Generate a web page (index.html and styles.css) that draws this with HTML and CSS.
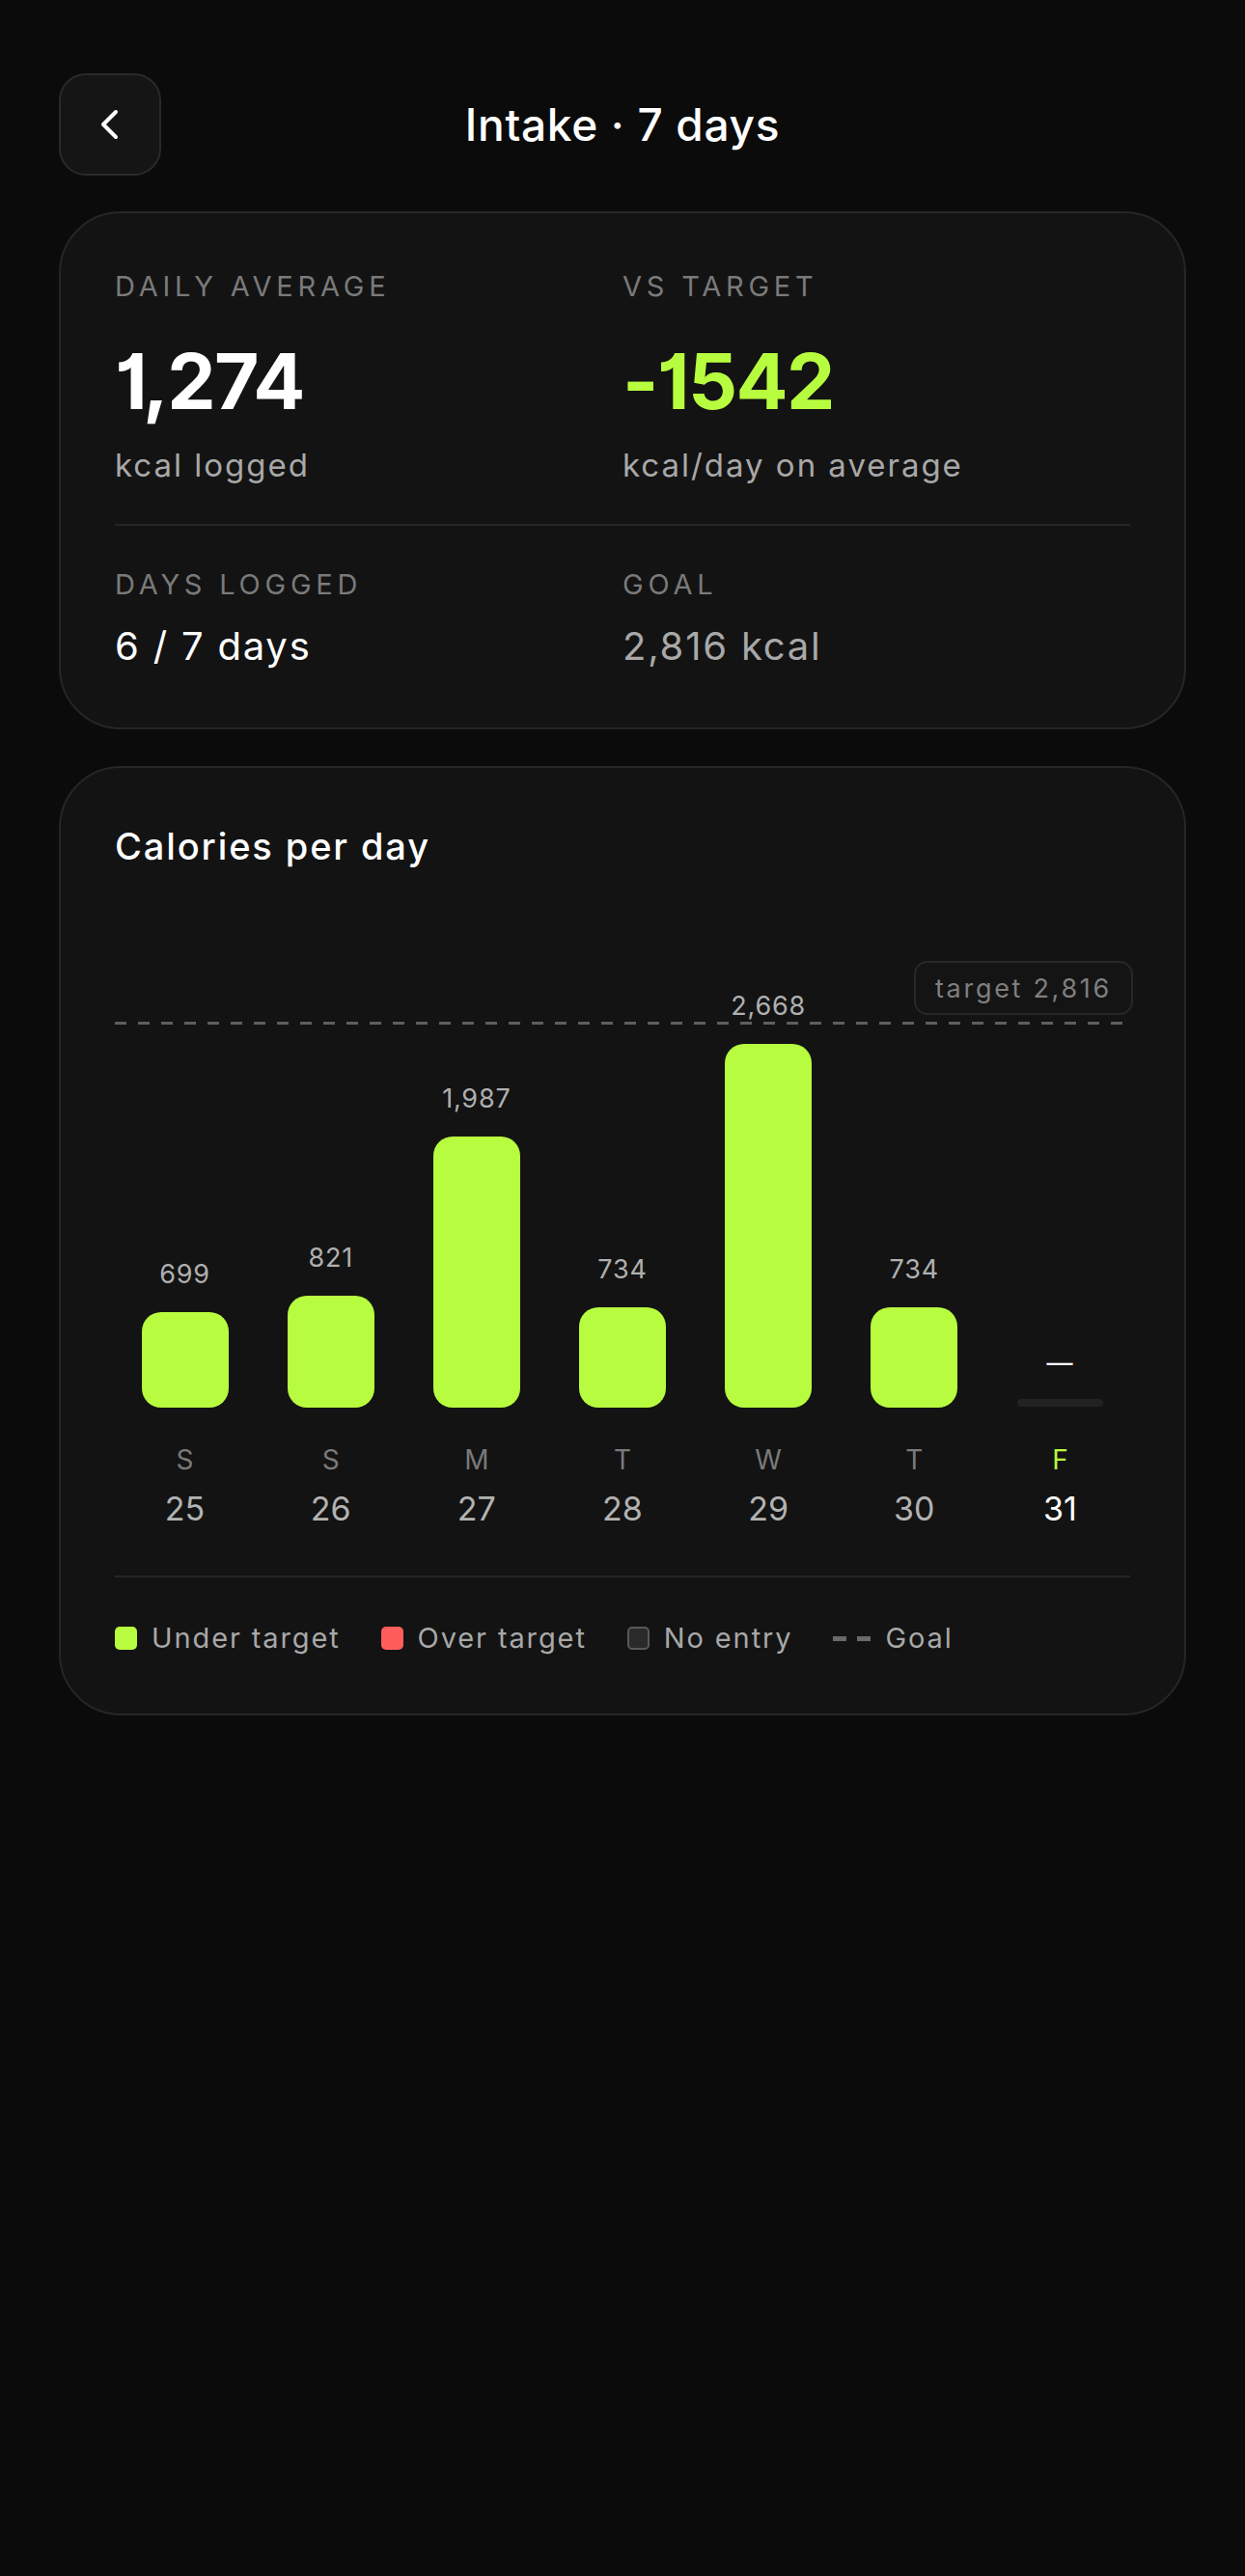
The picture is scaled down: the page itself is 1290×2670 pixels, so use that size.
FILE: index.html
```html
<!DOCTYPE html>
<html lang="en">

<head>
    <meta charset="UTF-8" />
    <meta name="viewport" content="width=device-width, initial-scale=1" />
    <title>Intake · 7 days</title>
    <link rel="stylesheet" href="styles.css">
</head>

<body>
    <div class="screen">
        <header class="topbar">
            <button class="back-btn" aria-label="Back">
                <svg viewBox="0 0 40 40" width="40" height="40">
                    <polyline points="26,7 13,20 26,33" />
                </svg>
            </button>
            <h1 class="page-title">Intake · 7 days</h1>
            <span></span>
        </header>

        <section class="card summary">
            <div class="stat-grid">
                <div class="stat">
                    <div class="stat-label">DAILY AVERAGE</div>
                    <div class="big-num">1,274</div>
                    <div class="stat-sub">kcal logged</div>
                </div>
                <div class="stat">
                    <div class="stat-label">VS TARGET</div>
                    <div class="big-num lime">-1542</div>
                    <div class="stat-sub">kcal/day on average</div>
                </div>
            </div>
            <div class="divider"></div>
            <div class="stat-grid">
                <div class="stat">
                    <div class="stat-label">DAYS LOGGED</div>
                    <div class="stat-value">6 / 7 days</div>
                </div>
                <div class="stat">
                    <div class="stat-label">GOAL</div>
                    <div class="stat-value muted">2,816 kcal</div>
                </div>
            </div>
        </section>

        <section class="card chart-card">
            <h2 class="chart-title">Calories per day</h2>

            <div class="plot">
                <div class="goal-line"></div>
                <div class="goal-pill">target 2,816</div>

                <div class="col">
                    <span class="val">699</span>
                    <div class="bar" style="height: 99px"></div>
                </div>
                <div class="col">
                    <span class="val">821</span>
                    <div class="bar" style="height: 116px"></div>
                </div>
                <div class="col">
                    <span class="val">1,987</span>
                    <div class="bar" style="height: 281px"></div>
                </div>
                <div class="col">
                    <span class="val">734</span>
                    <div class="bar" style="height: 104px"></div>
                </div>
                <div class="col">
                    <span class="val">2,668</span>
                    <div class="bar" style="height: 377px"></div>
                </div>
                <div class="col">
                    <span class="val">734</span>
                    <div class="bar" style="height: 104px"></div>
                </div>
                <div class="col">
                    <span class="val empty">—</span>
                    <div class="bar-empty"></div>
                </div>
            </div>

            <div class="days">
                <div class="day"><span class="dow">S</span><span class="date">25</span></div>
                <div class="day"><span class="dow">S</span><span class="date">26</span></div>
                <div class="day"><span class="dow">M</span><span class="date">27</span></div>
                <div class="day"><span class="dow">T</span><span class="date">28</span></div>
                <div class="day"><span class="dow">W</span><span class="date">29</span></div>
                <div class="day"><span class="dow">T</span><span class="date">30</span></div>
                <div class="day today"><span class="dow">F</span><span class="date">31</span></div>
            </div>

            <div class="divider chart-divider"></div>

            <div class="legend">
                <div class="legend-item"><span class="swatch under"></span>Under target</div>
                <div class="legend-item"><span class="swatch over"></span>Over target</div>
                <div class="legend-item"><span class="swatch none"></span>No entry</div>
                <div class="legend-item"><span class="goal-dash"><i></i><i></i></span>Goal</div>
            </div>
        </section>
    </div>
</body>
</html>
```

FILE: styles.css
```css
* {
    box-sizing: border-box;
}

body {
    margin: 0;
    background: #0b0b0b;
    font-family: Inter, "Noto Sans", sans-serif;
    color: #fff;
    min-height: 100vh;
}

.screen {
    padding: 76px 61px 0;
}

/* header */
.topbar {
    display: grid;
    grid-template-columns: 106px 1fr 106px;
    align-items: center;
    margin-bottom: 37px;
}

.back-btn {
    width: 106px;
    height: 106px;
    border-radius: 28px;
    background: #151515;
    border: 2px solid #2a2a2a;
    display: flex;
    align-items: center;
    justify-content: center;
    padding: 0;
}

.back-btn svg {
    fill: none;
    stroke: #fff;
    stroke-width: 4;
    stroke-linecap: round;
    stroke-linejoin: round;
}

.page-title {
    margin: 0;
    text-align: center;
    font-size: 46px;
    font-weight: 500;
    letter-spacing: 0.015em;
}

/* cards */
.card {
    background: #131313;
    border: 2px solid #262626;
    border-radius: 64px;
    padding: 58px 56px;
    margin-bottom: 38px;
}

.summary {
    padding-bottom: 60px;
}

.stat-grid {
    display: grid;
    grid-template-columns: 1fr 1fr;
}

.stat-label {
    font-size: 29px;
    line-height: 36px;
    letter-spacing: 0.165em;
    color: #7a7a7a;
}

.big-num {
    margin-top: 40px;
    font-size: 80px;
    line-height: 80px;
    font-weight: 700;
    letter-spacing: -0.02em;
    font-feature-settings: "cv01";
}

.big-num.lime {
    color: #b8fc3f;
}

.stat-sub {
    margin-top: 27px;
    font-size: 33px;
    line-height: 40px;
    color: #a8a8a8;
    letter-spacing: 0.06em;
}

.divider {
    height: 2px;
    background: #262626;
    margin: 41px 0 43px;
}

.stat-value {
    margin-top: 22px;
    font-size: 40px;
    line-height: 48px;
    letter-spacing: 0.045em;
}

.stat-value.muted {
    color: #a8a8a8;
}

/* chart */
.chart-card {
    padding-bottom: 60px;
}

.chart-title {
    margin: 0 0 3px;
    font-size: 38px;
    line-height: 46px;
    font-weight: 500;
    letter-spacing: 0.05em;
}

.plot {
    position: relative;
    height: 556px;
    margin: 0 -3px;
    display: grid;
    grid-template-columns: repeat(7, 1fr);
    align-items: end;
}

.goal-line {
    position: absolute;
    left: 3px;
    right: 10px;
    bottom: 397px;
    height: 3px;
    background: repeating-linear-gradient(90deg, #5e5e5e 0 12px, transparent 12px 24px);
}

.goal-pill {
    position: absolute;
    right: 0;
    bottom: 407px;
    height: 56px;
    padding: 0 20px;
    display: flex;
    align-items: center;
    border: 2px solid #272727;
    border-radius: 14px;
    background: #141414;
    font-size: 27px;
    letter-spacing: 0.1em;
    color: #7f7f7f;
}

.col {
    display: flex;
    flex-direction: column;
    align-items: center;
    position: relative;
}

.val {
    font-size: 27px;
    line-height: 32px;
    color: #b0b0b0;
    letter-spacing: 0.03em;
    margin-bottom: 23px;
}

.val.empty {
    color: #fff;
    margin-bottom: 21px;
}

.bar {
    width: 90px;
    background: #b8fc3f;
    border-radius: 20px;
}

.bar-empty {
    width: 89px;
    height: 8px;
    margin-bottom: 1px;
    border-radius: 4px;
    background: #222;
}

.days {
    display: grid;
    grid-template-columns: repeat(7, 1fr);
    margin: 37px -3px 0;
}

.day {
    display: flex;
    flex-direction: column;
    align-items: center;
}

.dow {
    font-size: 28px;
    line-height: 34px;
    color: #7a7a7a;
}

.date {
    margin-top: 14px;
    font-size: 34px;
    line-height: 40px;
    color: #b2b2b2;
}

.day.today .dow {
    color: #b8fc3f;
}

.day.today .date {
    color: #fff;
}

.chart-divider {
    margin: 49px 0 45px;
}

/* legend */
.legend {
    display: flex;
    align-items: center;
    gap: 42px;
    font-size: 29px;
    line-height: 36px;
    color: #a8a8a8;
    letter-spacing: 0.065em;
}

.legend-item {
    display: flex;
    align-items: center;
    gap: 15px;
}

.swatch {
    width: 23px;
    height: 24px;
    border-radius: 5px;
}

.swatch.under {
    background: #b8fc3f;
}

.swatch.over {
    background: #ff5c5c;
}

.swatch.none {
    background: #2a2a2a;
    border: 2px solid #585858;
}

.goal-dash {
    display: flex;
    gap: 11px;
}

.goal-dash i {
    width: 14px;
    height: 5px;
    background: #6a6a6a;
}
```
